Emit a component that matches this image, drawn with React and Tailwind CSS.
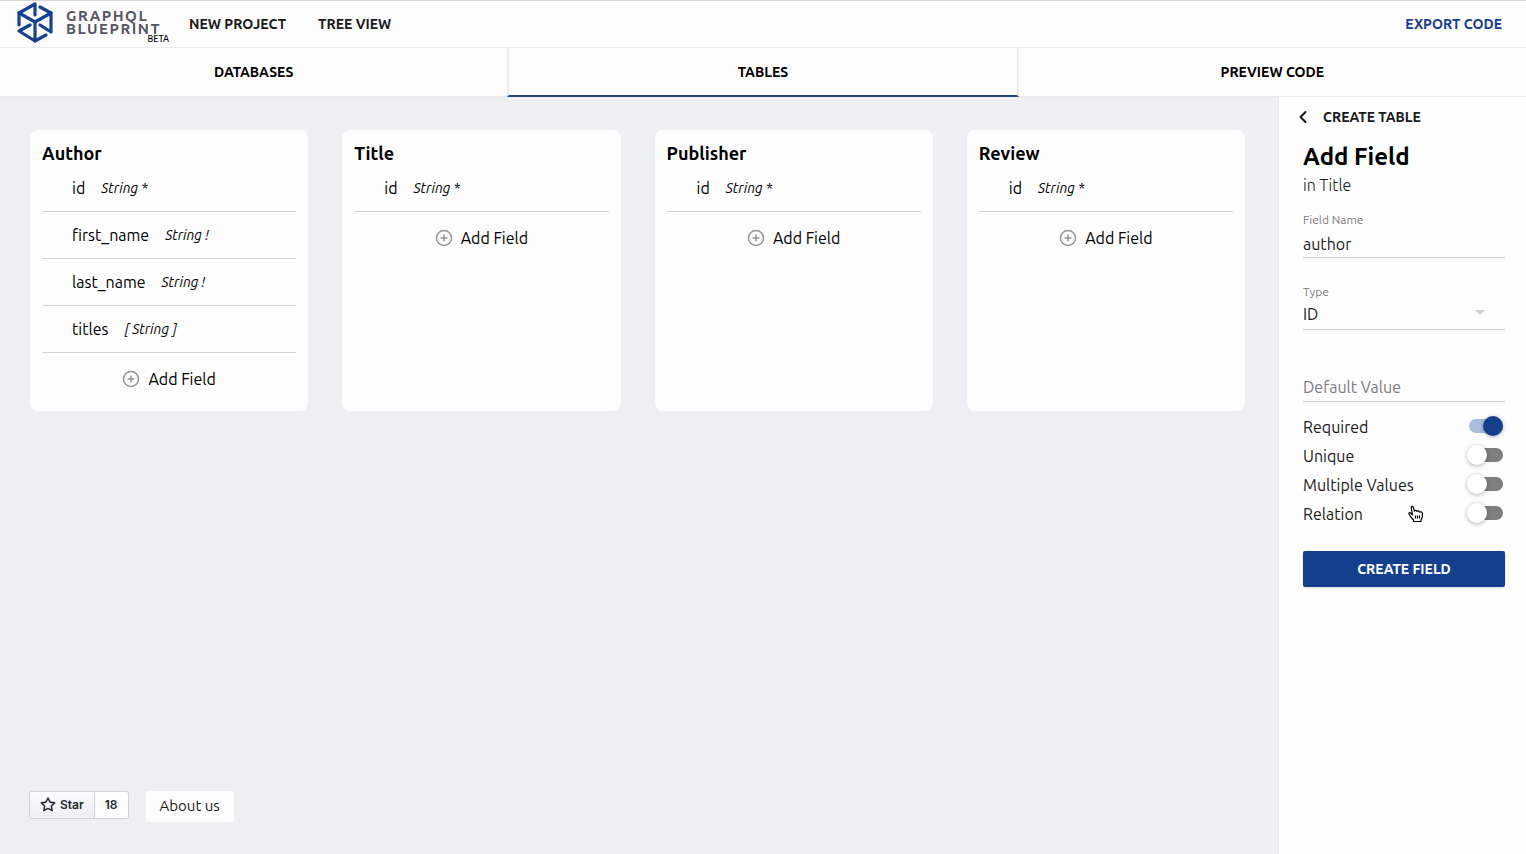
import { useState } from "react";
import { ChevronLeft, CirclePlus } from "lucide-react";

const tables = [
  {
    name: "Author",
    fields: [
      { name: "id", type: "String *" },
      { name: "first_name", type: "String !" },
      { name: "last_name", type: "String !" },
      { name: "titles", type: "[ String ]" },
    ],
  },
  { name: "Title", fields: [{ name: "id", type: "String *" }] },
  { name: "Publisher", fields: [{ name: "id", type: "String *" }] },
  { name: "Review", fields: [{ name: "id", type: "String *" }] },
];

const tabs = ["Databases", "Tables", "Preview Code"];

export default function App() {
  const [tab, setTab] = useState("Tables");

  return (
    <div className="flex min-h-screen flex-col bg-[#edeff3] font-['Ubuntu','Noto_Sans',sans-serif] text-black">
      <Header />
      <nav className="flex h-[49px] border-b border-[#eaebee] bg-[#fdfdfd]">
        {tabs.map((t) => (
          <Tab key={t} label={t} active={t === tab} onClick={() => setTab(t)} />
        ))}
      </nav>
      <div className="flex flex-1">
        <main className="flex flex-1 flex-col justify-between pt-[33px] pr-[33px] pb-8 pl-[30px]">
          <div className="grid grid-cols-4 gap-[34px]">
            {tables.map((t) => (
              <TableCard key={t.name} table={t} />
            ))}
          </div>
          <Footer />
        </main>
        <Sidebar />
      </div>
    </div>
  );
}

function Header() {
  return (
    <header className="flex h-12 items-center border-t border-b border-t-[#d8d8da] border-b-[#ebebed] bg-[#fdfdfd] pr-6 pl-4 text-sm font-semibold text-[#1a1a1a]">
      <a href="#" className="-mt-1 flex items-center gap-3">
        <Logo />
        <span className="relative text-[15px] leading-[13px] font-bold tracking-widest text-[#565563]">
          GRAPHQL
          <br />
          BLUEPRINT
          <span className="absolute -right-2 -bottom-2 text-[9px] leading-[8px] font-medium tracking-normal text-black">
            BETA
          </span>
        </span>
      </a>
      <button className="ml-7 uppercase">New Project</button>
      <button className="ml-8 uppercase">Tree View</button>
      <button className="ml-auto text-[#173f87] uppercase">Export Code</button>
    </header>
  );
}

function Logo() {
  return (
    <svg viewBox="0 0 38 42" className="h-[42px] w-[38px]" fill="none" stroke="#164390" strokeWidth="3.2" strokeLinecap="round" strokeLinejoin="round">
      <path d="M3 24V12L19 3V14" />
      <path d="M24 6L35 12V31L24 24" />
      <path d="M3 12L19 21L35 12" />
      <path d="M19 21V40L30 34" />
      <path d="M14 24L3 30L19 40" />
    </svg>
  );
}

function Tab({ label, active, onClick }) {
  return (
    <button
      onClick={onClick}
      className={
        active
          ? "-mb-px flex-1 border-x-2 border-b-2 border-x-[#ebebee] border-b-[#1d4678] text-sm font-semibold uppercase"
          : "flex-1 text-sm font-semibold uppercase"
      }
    >
      {label}
    </button>
  );
}

function TableCard({ table }) {
  return (
    <section className="rounded-lg bg-[#fdfdfd] px-3 pt-3 pb-3.5">
      <h2 className="text-lg leading-[23px] font-bold">{table.name}</h2>
      <ul>
        {table.fields.map((f) => (
          <li key={f.name} className="flex h-[47px] items-center gap-4 border-b border-[#d3d3d5] pl-[30px]">
            <span className="text-base">{f.name}</span>
            <span className="text-sm italic">{f.type}</span>
          </li>
        ))}
      </ul>
      <button className="mt-2 flex h-9 w-full items-center justify-center gap-2 text-base">
        <CirclePlus size={18} strokeWidth={2} className="text-[#959595]" />
        Add Field
      </button>
    </section>
  );
}

function Footer() {
  return (
    <footer className="flex items-start gap-[17px]">
      <div className="-ml-px flex h-7 rounded-[3px] border border-[#ced2d5] font-['Inter',sans-serif] text-xs font-semibold text-[#24292e]">
        <a href="#" className="flex items-center gap-1 rounded-l-[2px] bg-linear-to-b from-[#fafbfc] to-[#ebf0f3] px-2.5">
          <StarIcon />
          Star
        </a>
        <a href="#" className="flex items-center rounded-r-[2px] border-l border-[#ced2d5] bg-[#fdfdfd] px-2.5">
          18
        </a>
      </div>
      <a href="#" className="flex h-[31px] items-center rounded-[2px] bg-[#fdfdfd] px-3.5 text-[15px] text-[#1a1a1a]">
        About us
      </a>
    </footer>
  );
}

function StarIcon() {
  return (
    <svg viewBox="0 0 16 16" className="size-4" fill="currentColor">
      <path d="M8 .25a.75.75 0 0 1 .673.418l1.882 3.815 4.21.612a.75.75 0 0 1 .416 1.279l-3.046 2.97.719 4.192a.75.75 0 0 1-1.088.791L8 12.347l-3.766 1.98a.75.75 0 0 1-1.088-.79l.72-4.194L.818 6.374a.75.75 0 0 1 .416-1.28l4.21-.611L7.327.668A.75.75 0 0 1 8 .25Zm0 2.445L6.615 5.5a.75.75 0 0 1-.564.41l-3.097.45 2.24 2.184a.75.75 0 0 1 .216.664l-.528 3.084 2.769-1.456a.75.75 0 0 1 .698 0l2.77 1.456-.53-3.084a.75.75 0 0 1 .216-.664l2.24-2.183-3.096-.45a.75.75 0 0 1-.564-.41L8 2.694Z" />
    </svg>
  );
}

/* --- Add field form ---------------------------------------------------- */

function Sidebar() {
  const [name, setName] = useState("author");
  const [options, setOptions] = useState({
    Required: true,
    Unique: false,
    "Multiple Values": false,
    Relation: false,
  });

  const toggle = (key) => setOptions({ ...options, [key]: !options[key] });

  return (
    <aside className="w-[248px] shrink-0 border-l border-[#e8e9ec] bg-[#fdfdfd] pr-[21px] pl-6 text-[#1a1a1a]">
      <button className="-ml-2.5 flex h-10 items-center gap-2.5 text-sm font-semibold uppercase">
        <ChevronLeft size={20} strokeWidth={2.5} />
        Create Table
      </button>
      <h1 className="text-2xl leading-10 font-bold text-black">Add Field</h1>
      <p className="mb-[19px] text-base leading-4 font-light">in Title</p>

      <form onSubmit={(e) => e.preventDefault()}>
        <div className="flex flex-col gap-[26px]">
          <Field id="name" label="Field Name">
            <input
              id="name"
              value={name}
              onChange={(e) => setName(e.target.value)}
              className="block h-[30px] w-full border-b border-[#cfcfd1] pt-0.5 text-base outline-none"
            />
          </Field>
          <Field id="type" label="Type">
            <div className="relative">
              <select id="type" className="block h-[30px] w-full appearance-none border-b border-[#cfcfd1] pb-0.5 text-base outline-none">
                <option>ID</option>
                <option>String</option>
                <option>Int</option>
                <option>Float</option>
                <option>Boolean</option>
              </select>
              <svg viewBox="0 0 10 5" className="pointer-events-none absolute top-2.5 right-5 h-[5px] w-[10px]" fill="#d0d0d2">
                <path d="M0 0h10L5 5z" />
              </svg>
            </div>
          </Field>
          <Field id="default">
            <input
              id="default"
              aria-label="Default Value"
              placeholder="Default Value"
              className="block h-[30px] w-full border-b border-[#cfcfd1] text-base outline-none placeholder:text-[#7b7b80]"
            />
          </Field>
        </div>

        <div className="mt-2.5">
          {Object.keys(options).map((key) => (
            <Switch key={key} label={key} checked={options[key]} onChange={() => toggle(key)}>
              {key === "Relation" && <Pointer />}
            </Switch>
          ))}
        </div>

        <button className="mt-[23px] h-9 w-full rounded-[2px] bg-[#143f8c] text-sm font-semibold text-white uppercase shadow-sm">
          Create Field
        </button>
      </form>
    </aside>
  );
}

function Field({ id, label, children }) {
  return (
    <div>
      <label htmlFor={id} className="block h-4 text-xs leading-4 text-[#7b7b80]">
        {label}
      </label>
      {children}
    </div>
  );
}

function Switch({ label, checked, onChange, children }) {
  return (
    <label className="relative flex h-[29px] cursor-pointer items-center justify-between pr-0.5 text-base">
      {label}
      {children}
      <input
        type="checkbox"
        checked={checked}
        onChange={onChange}
        className="relative -mt-0.5 h-3.5 w-[34px] cursor-pointer appearance-none rounded-full bg-[#7e7e7e] before:absolute before:-top-[3px] before:-left-0.5 before:size-5 before:rounded-full before:bg-white before:shadow-[0_1px_4px_rgba(0,0,0,0.3)] checked:bg-[#a9bcdb] checked:before:left-3.5 checked:before:bg-[#143f8c]"
      />
    </label>
  );
}

function Pointer() {
  return (
    <svg viewBox="0 0 16 18" className="pointer-events-none absolute top-1.5 left-[105px] h-[18px] w-4" fill="#fff" stroke="#000" strokeWidth="1.2" strokeLinejoin="round">
      <path d="M5.5 16.5V15L2.5 11.5L1 9C.6 8 1.8 7.3 2.6 8L4.5 9.8L3.2 3C2.9 1.2 4.8.8 5.3 2.4L6.4 6.2C6.6 5 8.6 5 8.9 6.5C9.5 5.5 11.1 5.8 11.4 7.2C12.2 6.4 14.2 6.8 14.4 8.4V12L13 15V16.5Z" />
      <path d="M7.5 10.5v3M9.5 10.5v3M11.5 10.5v3" />
    </svg>
  );
}
